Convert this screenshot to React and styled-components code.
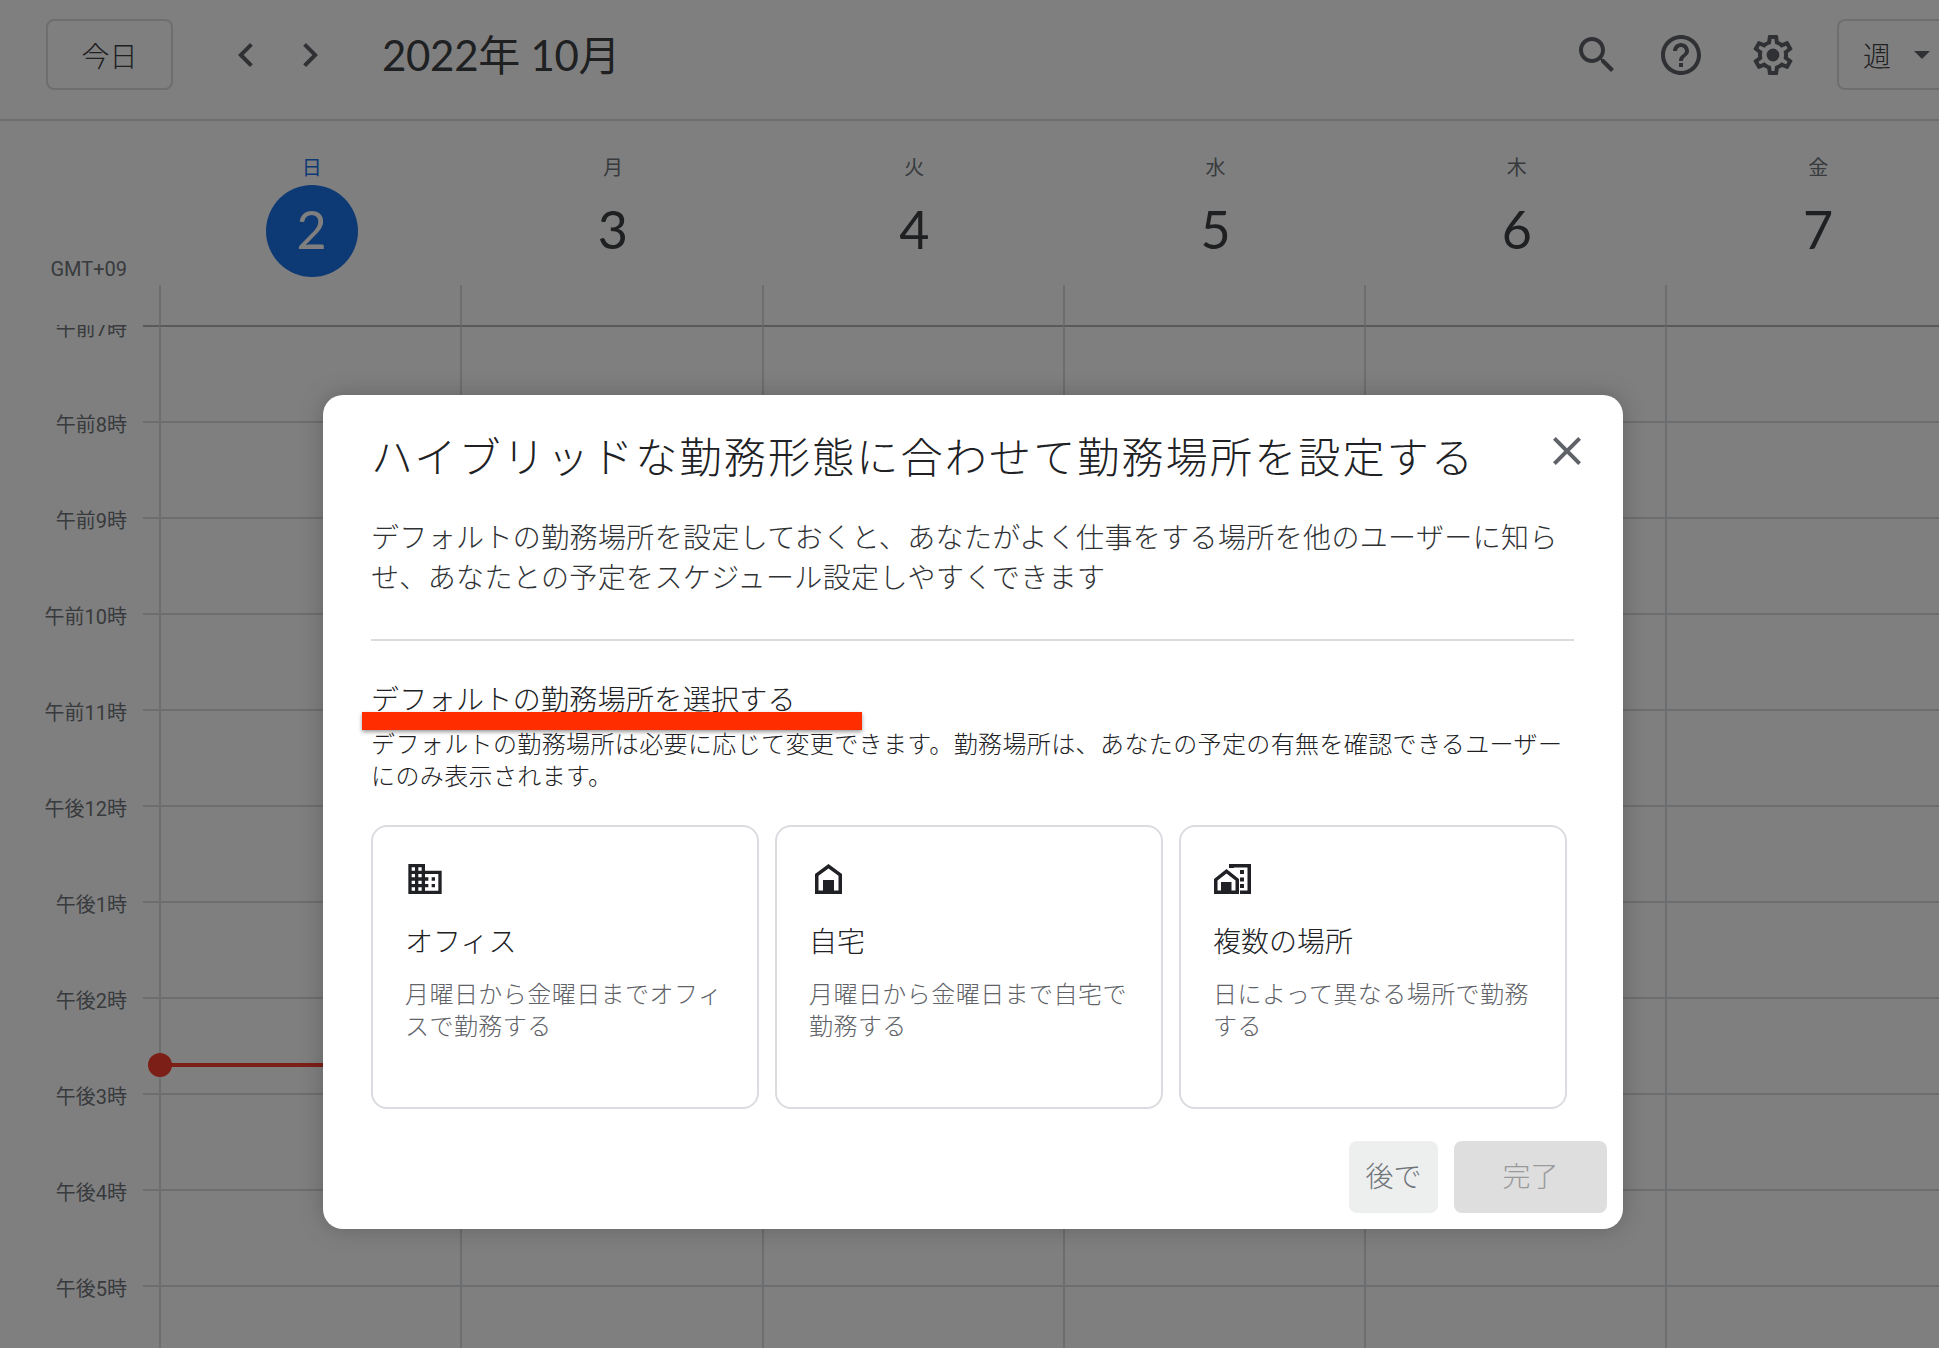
import React from "react";
import styled, { createGlobalStyle } from "styled-components";

const FONT = `"Noto Sans CJK JP", sans-serif`;
const LATIN = `Lato, "Noto Sans CJK JP", sans-serif`;
const ROBOTO = `Roboto, "Noto Sans CJK JP", sans-serif`;

const Global = createGlobalStyle`
  html, body { margin: 0; padding: 0; background: #fff; }
  * { box-sizing: border-box; }
  body { font-family: ${FONT}; font-weight: 300; }
`;

const Page = styled.div`
  position: relative;
  width: 1939px;
  height: 1348px;
  overflow: hidden;
  background: #fff;
`;

const TopBar = styled.header`
  display: flex;
  align-items: center;
  height: 121px;
  padding: 0 0 10px 46px;
  border-bottom: 2px solid #dadce0;
`;

const OutlineButton = styled.div`
  display: flex;
  align-items: center;
  justify-content: center;
  flex: none;
  width: 127px;
  height: 71px;
  border: 2px solid #dadce0;
  border-radius: 8px;
  font-size: 28px;
  color: #3c4043;
`;

const IconBox = styled.svg`
  display: block;
  flex: none;
  width: ${(p) => p.$size || 48}px;
  height: ${(p) => p.$size || 48}px;
  margin-left: ${(p) => p.$ml || 0}px;
  fill: ${(p) => p.$color || "#5f6368"};
`;

const MonthTitle = styled.h1`
  flex: 1;
  margin: 0 0 0 48px;
  font: 400 42px/52px ${LATIN};
  letter-spacing: -0.3px;
  color: #3c4043;
`;

const ViewSelect = styled.div`
  display: flex;
  align-items: center;
  flex: none;
  width: 132px;
  height: 71px;
  margin-left: 40px;
  margin-right: -30px;
  padding-left: 24px;
  border: 2px solid #dadce0;
  border-radius: 8px;
  font-size: 28px;
  color: #3c4043;
`;

const Caret = styled.span`
  width: 0;
  height: 0;
  margin-left: 23px;
  border-left: 8px solid transparent;
  border-right: 8px solid transparent;
  border-top: 8px solid #5f6368;
`;

const DayHeader = styled.div`
  display: flex;
  height: 204px;
`;

const Gutter = styled.div`
  flex: none;
  width: 159px;
  height: 100%;
  padding: 138px 32px 0 0;
  text-align: right;
  font: 400 20px/20px ${ROBOTO};
  color: #70757a;
`;

const DayCol = styled.div`
  display: flex;
  flex: none;
  flex-direction: column;
  align-items: center;
  width: 301.3px;
  padding-top: 32px;
  padding-left: 4px;
`;

const Weekday = styled.div`
  height: 28px;
  font-size: 20px;
  line-height: 28px;
  font-weight: 400;
  color: ${(p) => (p.$today ? "#1a73e8" : "#70757a")};
`;

const DateNum = styled.div`
  display: flex;
  align-items: center;
  justify-content: center;
  width: 92px;
  height: 92px;
  margin-top: 4px;
  padding-bottom: 4px;
  border-radius: 50%;
  font: 400 52px/1 ${LATIN};
  color: ${(p) => (p.$today ? "#fff" : "#3c4043")};
  background: ${(p) => (p.$today ? "#1a73e8" : "transparent")};
`;

const Stub = styled.div`
  align-self: flex-start;
  width: 2px;
  height: 40px;
  margin: 8px 0 0 -4px;
  background: #dadce0;
`;

const Scroller = styled.div`
  position: relative;
  height: 1023px;
  overflow: hidden;
`;

const HourRow = styled.div`
  display: flex;
  height: 96px;
`;

const LabelCell = styled.div`
  flex: none;
  width: 143px;
  padding-right: 16px;
  text-align: right;
  font: 400 20px/24px ${ROBOTO};
  color: #70757a;
  transform: translateY(-8px);
`;

const Tick = styled.div`
  flex: none;
  width: 16px;
  border-top: 2px solid ${(p) => (p.$first ? "#b4b4b4" : "#dadce0")};
`;

const Cell = styled.div`
  flex: none;
  width: 301.3px;
  border-top: 2px solid ${(p) => (p.$first ? "#b4b4b4" : "#dadce0")};
  border-left: 2px solid #dadce0;
`;

const NowLine = styled.div`
  position: absolute;
  left: 160px;
  width: 301px;
  top: 738px;
  height: 4px;
  background: #f83e2e;
`;

const NowDot = styled.div`
  position: absolute;
  left: -12px;
  top: -10px;
  width: 24px;
  height: 24px;
  border-radius: 50%;
  background: #f83e2e;
`;

const Scrim = styled.div`
  position: absolute;
  inset: 0;
  background: rgba(0, 0, 0, 0.5);
`;

const Modal = styled.section`
  position: absolute;
  left: 323px;
  top: 395px;
  width: 1300px;
  height: 834px;
  padding: 34px 49px 16px 48px;
  border-radius: 20px;
  background: #fff;
  box-shadow: 0 0 24px rgba(0, 0, 0, 0.22);
`;

const ModalHead = styled.div`
  display: flex;
  align-items: flex-start;
  justify-content: space-between;
`;

const ModalTitle = styled.h2`
  margin: 0;
  font-size: 42px;
  font-weight: 300;
  line-height: 52px;
  letter-spacing: 2.2px;
  color: #202124;
`;

const CloseBtn = styled.div`
  flex: none;
  margin: -2px -17px 0 0;
`;

const Lead = styled.p`
  margin: 35px 0 0;
  font-size: 28px;
  line-height: 40px;
  letter-spacing: 0.37px;
  color: #2f3235;
`;

const Divider = styled.hr`
  height: 2px;
  margin: 43px 0 0;
  border: 0;
  background: #dadce0;
`;

const Sub = styled.h3`
  margin: 39px 0 0;
  font-size: 28px;
  font-weight: 300;
  line-height: 36px;
  letter-spacing: 0.33px;
  color: #202124;
`;

const Hint = styled.p`
  margin: 11px 0 0;
  font-size: 24px;
  line-height: 32px;
  letter-spacing: 0.38px;
  color: #202124;
`;

const RedMark = styled.div`
  position: absolute;
  left: 39px;
  top: 317px;
  width: 500px;
  height: 18px;
  background: #ff2d00;
  box-shadow: 0 2px 4px rgba(0, 0, 0, 0.4);
`;

const Cards = styled.div`
  display: grid;
  grid-template-columns: repeat(3, 388px);
  column-gap: 16px;
  margin-top: 34px;
`;

const Card = styled.div`
  height: 284px;
  padding: 32px 24px 0 32px;
  border: 2px solid #dadce0;
  border-radius: 16px;
`;

const CardTitle = styled.div`
  margin-top: 23px;
  font-size: 28px;
  line-height: 36px;
  color: #202124;
`;

const CardText = styled.div`
  margin-top: 19px;
  font-size: 24px;
  line-height: 32px;
  letter-spacing: 0.45px;
  color: #5f6368;
`;

const Footer = styled.div`
  display: flex;
  justify-content: flex-end;
  gap: 16px;
  margin: 32px -33px 0 0;
`;

const FootBtn = styled.div`
  display: flex;
  align-items: center;
  justify-content: center;
  width: ${(p) => p.$w}px;
  height: 72px;
  padding-bottom: 4px;
  border-radius: 8px;
  font-size: 28px;
  background: ${(p) => p.$bg};
  color: ${(p) => p.$fg};
`;

const P = {
  left: "M15.41 7.41L14 6l-6 6 6 6 1.41-1.41L10.83 12z",
  right: "M10 6L8.59 7.41 13.17 12l-4.58 4.59L10 18l6-6z",
  search:
    "M15.5 14h-.79l-.28-.27C15.41 12.59 16 11.11 16 9.5 16 5.91 13.09 3 9.5 3S3 5.91 3 9.5 5.91 16 9.5 16c1.61 0 3.09-.59 4.23-1.57l.27.28v.79l5 4.99L20.49 19l-4.99-5zm-6 0C7.01 14 5 11.99 5 9.5S7.01 5 9.5 5 14 7.01 14 9.5 11.99 14 9.5 14z",
  help: "M11 18h2v-2h-2v2zm1-16C6.48 2 2 6.48 2 12s4.48 10 10 10 10-4.48 10-10S17.52 2 12 2zm0 18c-4.41 0-8-3.59-8-8s3.59-8 8-8 8 3.59 8 8-3.59 8-8 8zm0-14c-2.21 0-4 1.79-4 4h2c0-1.1.9-2 2-2s2 .9 2 2c0 2-3 1.75-3 5h2c0-2.25 3-2.5 3-5 0-2.21-1.79-4-4-4z",
  gear: "M19.43 12.98c.04-.32.07-.64.07-.98 0-.34-.03-.66-.07-.98l2.11-1.65c.19-.15.24-.42.12-.64l-2-3.46c-.09-.16-.26-.25-.44-.25-.06 0-.12.01-.17.03l-2.49 1c-.52-.4-1.08-.73-1.69-.98l-.38-2.65C14.46 2.18 14.25 2 14 2h-4c-.25 0-.46.18-.49.42l-.38 2.65c-.61.25-1.17.59-1.69.98l-2.49-1c-.06-.02-.12-.03-.18-.03-.17 0-.34.09-.43.25l-2 3.46c-.13.22-.07.49.12.64l2.11 1.65c-.04.32-.07.65-.07.98 0 .33.03.66.07.98l-2.11 1.65c-.19.15-.24.42-.12.64l2 3.46c.09.16.26.25.44.25.06 0 .12-.01.17-.03l2.49-1c.52.4 1.08.73 1.69.98l.38 2.65c.03.24.24.42.49.42h4c.25 0 .46-.18.49-.42l.38-2.65c.61-.25 1.17-.59 1.69-.98l2.49 1c.06.02.12.03.18.03.17 0 .34-.09.43-.25l2-3.46c.12-.22.07-.49-.12-.64l-2.11-1.65zm-1.98-1.71c.04.31.05.52.05.73 0 .21-.02.43-.05.73l-.14 1.13.89.7 1.08.84-.7 1.21-1.27-.51-1.04-.42-.9.68c-.43.32-.84.56-1.25.73l-1.06.43-.16 1.13-.2 1.35h-1.4l-.19-1.35-.16-1.13-1.06-.43c-.43-.18-.83-.41-1.23-.71l-.91-.7-1.06.43-1.27.51-.7-1.21 1.08-.84.89-.7-.14-1.13c-.03-.31-.05-.54-.05-.74s.02-.43.05-.73l.14-1.13-.89-.7-1.08-.84.7-1.21 1.27.51 1.04.42.9-.68c.43-.32.84-.56 1.25-.73l1.06-.43.16-1.13.2-1.35h1.39l.19 1.35.16 1.13 1.06.43c.43.18.83.41 1.23.71l.91.7 1.06-.43 1.27-.51.7 1.21-1.07.85-.89.7.14 1.13zM12 8.8a3.2 3.2 0 1 0 0 6.4 3.2 3.2 0 0 0 0-6.4z",
  close:
    "M19 6.41L17.59 5 12 10.59 6.41 5 5 6.41 10.59 12 5 17.59 6.41 19 12 13.41 17.59 19 19 17.59 13.41 12z",
  domain:
    "M12 7V3H2v18h20V7H12zM6 19H4v-2h2v2zm0-4H4v-2h2v2zm0-4H4V9h2v2zm0-4H4V5h2v2zm4 12H8v-2h2v2zm0-4H8v-2h2v2zm0-4H8V9h2v2zm0-4H8V5h2v2zm10 12h-8v-2h2v-2h-2v-2h2v-2h-2V9h8v10zm-2-8h-2v2h2v-2zm0 4h-2v2h2v-2z",
};

const Icon = ({ d, ...rest }) => (
  <IconBox viewBox="0 0 24 24" {...rest}>
    <path d={d} />
  </IconBox>
);

const HomeIcon = () => (
  <IconBox viewBox="0 0 40 40" $size={40} $color="#202124">
    <path
      fillRule="evenodd"
      d="M6 35V15L19.5 5 33 15V35ZM9.5 31.5H14V21H25V31.5H29.5V16.8L19.5 9.4 9.5 16.8Z"
    />
  </IconBox>
);

const MultiIcon = () => (
  <IconBox viewBox="0 0 40 40" $size={40} $color="#202124">
    <path
      fillRule="evenodd"
      d="M1 35V20L13.5 10 26 20V35ZM4.5 31.5H8V23H18.5V31.5H22.5V21.5L13.5 14.4 4.5 21.5Z"
    />
    <path d="M16 5H38V35H27V31.5H34.5V8.5H21V9H16Z" />
    <path d="M27 11H31V15H27ZM27 18.5H31V22.5H27ZM27 25H31V29H27Z" />
  </IconBox>
);

const DAYS = [
  ["日", "2", true],
  ["月", "3"],
  ["火", "4"],
  ["水", "5"],
  ["木", "6"],
  ["金", "7"],
];

const HOURS = [
  "午前7時",
  "午前8時",
  "午前9時",
  "午前10時",
  "午前11時",
  "午後12時",
  "午後1時",
  "午後2時",
  "午後3時",
  "午後4時",
  "午後5時",
];

const CARDS = [
  { title: "オフィス", text: "月曜日から金曜日までオフィスで勤務する", icon: <Icon d={P.domain} $size={40} $color="#202124" /> },
  { title: "自宅", text: "月曜日から金曜日まで自宅で勤務する", icon: <HomeIcon /> },
  { title: "複数の場所", text: "日によって異なる場所で勤務する", icon: <MultiIcon /> },
];

export default function App() {
  return (
    <Page>
      <Global />
      <TopBar>
        <OutlineButton>今日</OutlineButton>
        <Icon d={P.left} $ml={49} />
        <Icon d={P.right} $ml={16} />
        <MonthTitle>2022年 10月</MonthTitle>
        <Icon d={P.search} />
        <Icon d={P.help} $ml={36} />
        <Icon d={P.gear} $ml={44} />
        <ViewSelect>
          週<Caret />
        </ViewSelect>
      </TopBar>
      <DayHeader>
        <Gutter>GMT+09</Gutter>
        {DAYS.map(([w, n, today]) => (
          <DayCol key={w}>
            <Weekday $today={today}>{w}</Weekday>
            <DateNum $today={today}>{n}</DateNum>
            <Stub />
          </DayCol>
        ))}
      </DayHeader>
      <Scroller>
        {HOURS.map((h, i) => (
          <HourRow key={h}>
            <LabelCell>{h}</LabelCell>
            <Tick $first={i === 0} />
            {DAYS.map(([w]) => (
              <Cell key={w} $first={i === 0} />
            ))}
          </HourRow>
        ))}
        <NowLine>
          <NowDot />
        </NowLine>
      </Scroller>
      <Scrim />
      <Modal>
        <ModalHead>
          <ModalTitle>ハイブリッドな勤務形態に合わせて勤務場所を設定する</ModalTitle>
          <CloseBtn>
            <Icon d={P.close} />
          </CloseBtn>
        </ModalHead>
        <Lead>
          デフォルトの勤務場所を設定しておくと、あなたがよく仕事をする場所を他のユーザーに知らせ、あなたとの予定をスケジュール設定しやすくできます
        </Lead>
        <Divider />
        <Sub>デフォルトの勤務場所を選択する</Sub>
        <Hint>
          デフォルトの勤務場所は必要に応じて変更できます。勤務場所は、あなたの予定の有無を確認できるユーザーにのみ表示されます。
        </Hint>
        <RedMark />
        <Cards>
          {CARDS.map((c) => (
            <Card key={c.title}>
              {c.icon}
              <CardTitle>{c.title}</CardTitle>
              <CardText>{c.text}</CardText>
            </Card>
          ))}
        </Cards>
        <Footer>
          <FootBtn $w={89} $bg="#edeeee" $fg="#70757a">後で</FootBtn>
          <FootBtn $w={153} $bg="#dedede" $fg="#9a9a9a">完了</FootBtn>
        </Footer>
      </Modal>
    </Page>
  );
}
